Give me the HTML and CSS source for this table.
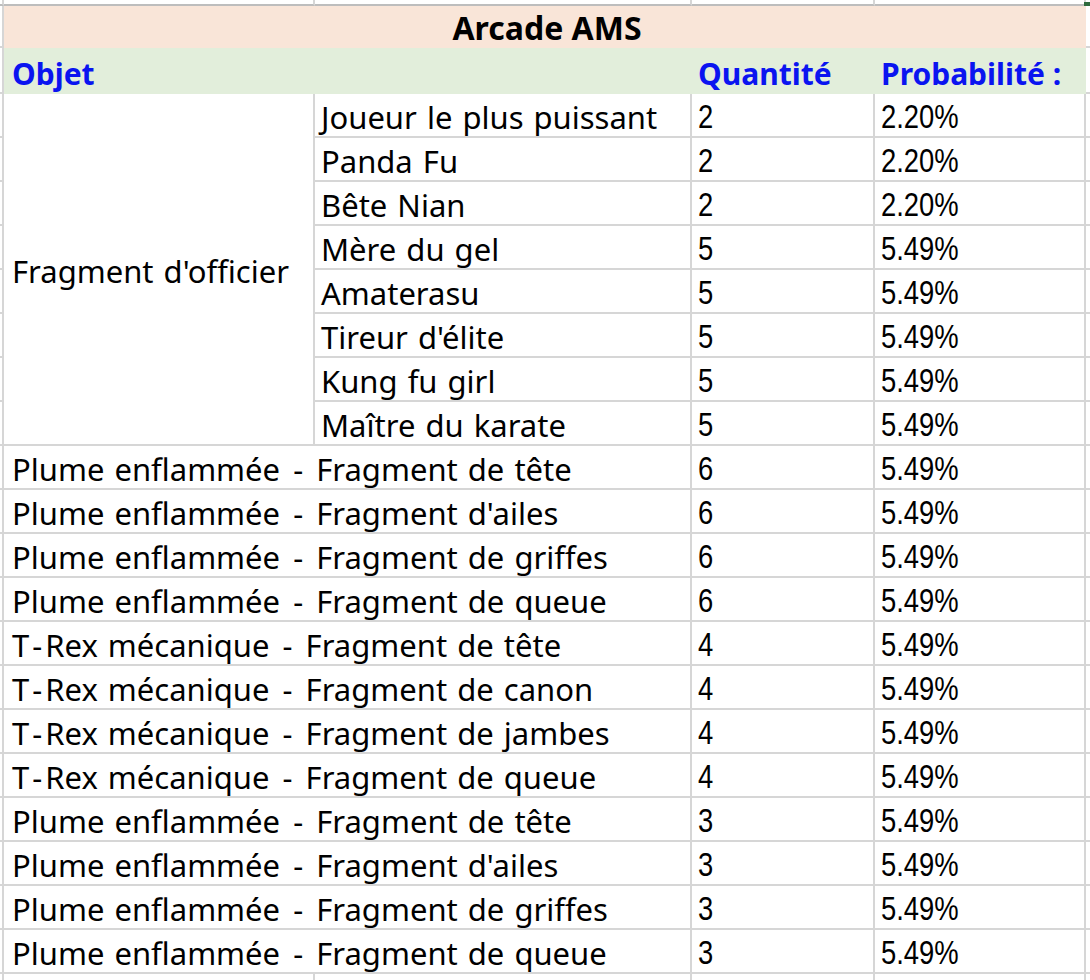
FILE: index.html
```html
<!DOCTYPE html>
<html lang="fr">
<head>
<meta charset="utf-8">
<title>Arcade AMS</title>
<link rel="stylesheet" href="styles.css">
</head>
<body>
<div class="sheet">
  <div class="c top edge"></div><div class="c top"></div><div class="c top"></div><div class="c top"></div><div class="c top"></div><div class="c top last"></div>

  <div class="c edge"></div><div class="title">Arcade AMS</div><div class="c last"></div>

  <div class="c edge"></div><div class="hdr span2 first">Objet</div><div class="hdr">Quantité</div><div class="hdr">Probabilité :</div><div class="c last"></div>

  <div class="c edge"></div><div class="c txt merged first"><span>Fragment d'officier</span></div><div class="c txt"><span>Joueur le plus puissant</span></div><div class="c num"><span>2</span></div><div class="c num"><span>2.20%</span></div><div class="c last"></div>
  <div class="c edge"></div><div class="c txt"><span>Panda Fu</span></div><div class="c num"><span>2</span></div><div class="c num"><span>2.20%</span></div><div class="c last"></div>
  <div class="c edge"></div><div class="c txt"><span>Bête Nian</span></div><div class="c num"><span>2</span></div><div class="c num"><span>2.20%</span></div><div class="c last"></div>
  <div class="c edge"></div><div class="c txt"><span>Mère du gel</span></div><div class="c num"><span>5</span></div><div class="c num"><span>5.49%</span></div><div class="c last"></div>
  <div class="c edge"></div><div class="c txt"><span>Amaterasu</span></div><div class="c num"><span>5</span></div><div class="c num"><span>5.49%</span></div><div class="c last"></div>
  <div class="c edge"></div><div class="c txt"><span>Tireur d'élite</span></div><div class="c num"><span>5</span></div><div class="c num"><span>5.49%</span></div><div class="c last"></div>
  <div class="c edge"></div><div class="c txt"><span>Kung fu girl</span></div><div class="c num"><span>5</span></div><div class="c num"><span>5.49%</span></div><div class="c last"></div>
  <div class="c edge"></div><div class="c txt"><span>Maître du karate</span></div><div class="c num"><span>5</span></div><div class="c num"><span>5.49%</span></div><div class="c last"></div>

  <div class="c edge"></div><div class="c txt span2 first"><span>Plume enflammée <span class="hy">-</span> Fragment de tête</span></div><div class="c num"><span>6</span></div><div class="c num"><span>5.49%</span></div><div class="c last"></div>
  <div class="c edge"></div><div class="c txt span2 first"><span>Plume enflammée <span class="hy">-</span> Fragment d'ailes</span></div><div class="c num"><span>6</span></div><div class="c num"><span>5.49%</span></div><div class="c last"></div>
  <div class="c edge"></div><div class="c txt span2 first"><span>Plume enflammée <span class="hy">-</span> Fragment de griffes</span></div><div class="c num"><span>6</span></div><div class="c num"><span>5.49%</span></div><div class="c last"></div>
  <div class="c edge"></div><div class="c txt span2 first"><span>Plume enflammée <span class="hy">-</span> Fragment de queue</span></div><div class="c num"><span>6</span></div><div class="c num"><span>5.49%</span></div><div class="c last"></div>
  <div class="c edge"></div><div class="c txt span2 first"><span>T<span class="hy">-</span>Rex mécanique <span class="hy">-</span> Fragment de tête</span></div><div class="c num"><span>4</span></div><div class="c num"><span>5.49%</span></div><div class="c last"></div>
  <div class="c edge"></div><div class="c txt span2 first"><span>T<span class="hy">-</span>Rex mécanique <span class="hy">-</span> Fragment de canon</span></div><div class="c num"><span>4</span></div><div class="c num"><span>5.49%</span></div><div class="c last"></div>
  <div class="c edge"></div><div class="c txt span2 first"><span>T<span class="hy">-</span>Rex mécanique <span class="hy">-</span> Fragment de jambes</span></div><div class="c num"><span>4</span></div><div class="c num"><span>5.49%</span></div><div class="c last"></div>
  <div class="c edge"></div><div class="c txt span2 first"><span>T<span class="hy">-</span>Rex mécanique <span class="hy">-</span> Fragment de queue</span></div><div class="c num"><span>4</span></div><div class="c num"><span>5.49%</span></div><div class="c last"></div>
  <div class="c edge"></div><div class="c txt span2 first"><span>Plume enflammée <span class="hy">-</span> Fragment de tête</span></div><div class="c num"><span>3</span></div><div class="c num"><span>5.49%</span></div><div class="c last"></div>
  <div class="c edge"></div><div class="c txt span2 first"><span>Plume enflammée <span class="hy">-</span> Fragment d'ailes</span></div><div class="c num"><span>3</span></div><div class="c num"><span>5.49%</span></div><div class="c last"></div>
  <div class="c edge"></div><div class="c txt span2 first"><span>Plume enflammée <span class="hy">-</span> Fragment de griffes</span></div><div class="c num"><span>3</span></div><div class="c num"><span>5.49%</span></div><div class="c last"></div>
  <div class="c edge"></div><div class="c txt span2 first"><span>Plume enflammée <span class="hy">-</span> Fragment de queue</span></div><div class="c num"><span>3</span></div><div class="c num"><span>5.49%</span></div><div class="c last"></div>

  <div class="c bottom edge"></div><div class="c bottom"></div><div class="c bottom"></div><div class="c bottom"></div><div class="c bottom"></div><div class="c bottom last"></div>

  <div class="handle"></div>
</div>
</body>
</html>
```

FILE: styles.css
```css
html, body {
  margin: 0;
  padding: 0;
  background: #ffffff;
}

.sheet {
  position: relative;
  width: 1090px;
  height: 980px;
  overflow: hidden;
  display: grid;
  grid-template-columns: 4px 311px 377px 183px 211px 4px;
  grid-template-rows: 6px 42px 46px repeat(20, 44px) 6px;
  font-family: "Noto Sans", "Open Sans", sans-serif;
  color: #000;
}

.c {
  box-sizing: border-box;
  border-right: 2px solid #d6d6d6;
  border-bottom: 2px solid #d6d6d6;
  background: #fff;
  min-width: 0;
  white-space: nowrap;
  overflow: hidden;
}

.c.last {
  border-right: none;
}

.c.top {
  border-bottom: 2px solid #bdbdbd;
}

.c.bottom {
  border-bottom: none;
}

.span2 {
  grid-column: span 2;
}

.merged {
  grid-row: span 8;
}

.title {
  grid-column: span 4;
  background: #f9e5d8;
  font-weight: 700;
  font-size: 32px;
  display: flex;
  align-items: center;
  justify-content: center;
  padding-top: 1px;
  padding-left: 4px;
  white-space: nowrap;
}

.hdr {
  background: #e2eedb;
  color: #0a14f0;
  font-weight: 700;
  font-size: 30px;
  display: flex;
  align-items: center;
  padding-left: 6px;
  padding-top: 4px;
  white-space: nowrap;
  box-sizing: border-box;
}

.hdr.first {
  padding-left: 8px;
}

.txt {
  font-size: 31px;
  word-spacing: 2px;
  display: flex;
  align-items: center;
  padding-left: 6px;
  padding-top: 4px;
}

.txt.first {
  padding-left: 8px;
}

.hy {
  margin: 0 3px;
}

.num {
  font-family: "Liberation Sans", Arial, sans-serif;
  font-size: 33px;
  display: flex;
  align-items: center;
  padding-left: 6px;
  padding-top: 4px;
}

.num span {
  display: inline-block;
  transform: scaleX(0.83);
  transform-origin: left center;
}

.handle {
  position: absolute;
  left: 1084px;
  top: 2px;
  width: 6px;
  height: 4px;
  background: #2e6b3e;
}
```
